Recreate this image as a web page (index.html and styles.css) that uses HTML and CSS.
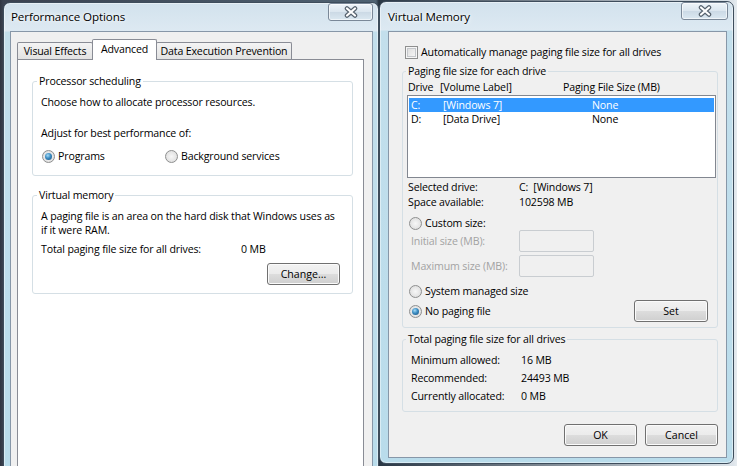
FILE: index.html
```html
<!DOCTYPE html>
<html lang="en">
<head>
<meta charset="utf-8">
<title>Performance Options</title>
<link rel="stylesheet" href="styles.css">
</head>
<body>
<main class="desktop">
  <section class="win win-perf">
    <header class="titlebar">
      <span class="title">Performance Options</span>
      <span class="close"><svg width="14" height="12" viewBox="0 0 14 12"><path d="M3 2.5 L11 9.5 M11 2.5 L3 9.5" stroke="#56626e" stroke-width="4.5" stroke-linecap="round"/><path d="M3 2.5 L11 9.5 M11 2.5 L3 9.5" stroke="#fff" stroke-width="2.2" stroke-linecap="round"/></svg></span>
    </header>
    <div class="client client-perf">
      <nav class="tabs">
        <span class="tab tab-ve">Visual Effects</span>
        <span class="tab tab-adv active">Advanced</span>
        <span class="tab tab-dep">Data Execution Prevention</span>
      </nav>
      <div class="panel">
        <fieldset class="group group-proc">
          <legend>Processor scheduling</legend>
          <p class="line choose">Choose how to allocate processor resources.</p>
          <p class="line adjust">Adjust for best performance of:</p>
          <div class="radio-row">
            <label class="opt opt-programs"><span class="radio checked"></span>Programs</label>
            <label class="opt"><span class="radio"></span>Background services</label>
          </div>
        </fieldset>
        <fieldset class="group group-vm">
          <legend>Virtual memory</legend>
          <p class="para">A paging file is an area on the hard disk that Windows uses as<br>if it were RAM.</p>
          <div class="total"><span class="total-label">Total paging file size for all drives:</span><span>0 MB</span></div>
          <div class="change-row"><button class="btn btn-change">Change...</button></div>
        </fieldset>
      </div>
    </div>
  </section>

  <section class="win win-vm">
    <header class="titlebar">
      <span class="title">Virtual Memory</span>
      <span class="close"><svg width="14" height="12" viewBox="0 0 14 12"><path d="M3 2.5 L11 9.5 M11 2.5 L3 9.5" stroke="#56626e" stroke-width="4.5" stroke-linecap="round"/><path d="M3 2.5 L11 9.5 M11 2.5 L3 9.5" stroke="#fff" stroke-width="2.2" stroke-linecap="round"/></svg></span>
    </header>
    <div class="client client-vm">
      <label class="check-row"><span class="checkbox"></span>Automatically manage paging file size for all drives</label>
      <fieldset class="group group-drives">
        <legend>Paging file size for each drive</legend>
        <div class="list-head"><span class="c-drive">Drive</span><span class="c-label">[Volume Label]</span><span>Paging File Size (MB)</span></div>
        <ul class="listbox">
          <li class="row selected"><span class="c1">C:</span><span class="c2">[Windows 7]</span><span>None</span></li>
          <li class="row"><span class="c1">D:</span><span class="c2">[Data Drive]</span><span>None</span></li>
        </ul>
        <dl class="info">
          <dt>Selected drive:</dt><dd>C:&nbsp; [Windows 7]</dd>
          <dt>Space available:</dt><dd>102598 MB</dd>
        </dl>
        <label class="opt-row custom"><span class="radio"></span>Custom size:</label>
        <div class="size-row"><span class="disabled">Initial size (MB):</span><span class="input"></span></div>
        <div class="size-row max"><span class="disabled">Maximum size (MB):</span><span class="input"></span></div>
        <label class="opt-row system"><span class="radio"></span>System managed size</label>
        <div class="nopage-row"><label class="opt-row"><span class="radio checked"></span>No paging file</label><button class="btn btn-set">Set</button></div>
      </fieldset>
      <fieldset class="group group-total">
        <legend>Total paging file size for all drives</legend>
        <dl class="totals">
          <dt>Minimum allowed:</dt><dd>16 MB</dd>
          <dt>Recommended:</dt><dd>24493 MB</dd>
          <dt>Currently allocated:</dt><dd>0 MB</dd>
        </dl>
      </fieldset>
      <div class="buttons"><button class="btn">OK</button><button class="btn">Cancel</button></div>
    </div>
  </section>
</main>
</body>
</html>
```

FILE: styles.css
```css
* { box-sizing: border-box; }
html, body { margin: 0; padding: 0; }
body {
  width: 737px; height: 466px; overflow: hidden;
  font-family: "Open Sans", "Noto Sans", sans-serif;
  font-size: 10.6px; letter-spacing: -0.15px; line-height: 15px; color: #000;
  background: linear-gradient(to right, #2f3541 0, #3a4250 3px, #4f6272 376px, #24303c 379px, #2a3846 380px, #dde4ea 733px, #e6ebef 737px);
}
.desktop { position: relative; width: 737px; height: 466px; }

.win {
  position: absolute;
  display: flex; flex-direction: column;
  border: 1px solid #3e4d5c;
  border-radius: 7px 7px 0 0;
  background: linear-gradient(to bottom, #d2e2ed 0, #dde9f2 28px, #c3dfec 29px, #b9dceb 100%);
  box-shadow: inset 0 0 0 1px rgba(255,255,255,.45);
}
.win-perf { left: 3px; top: 2px; width: 376px; height: 480px; }
.win-vm { left: 379px; top: 1px; width: 355px; height: 463px; border-radius: 7px; }

.titlebar { flex: none; display: flex; justify-content: space-between; align-items: flex-start; }
.win-perf .titlebar { height: 28px; padding: 0 5px 0 7px; }
.win-vm .titlebar { height: 29px; padding: 0 5px 0 8px; }
.title { margin-top: 6px; font-size: 11.6px; letter-spacing: -0.1px; line-height: 15px; text-shadow: 0 0 6px #fff, 0 0 3px #fff; }
.win-vm .title { margin-top: 7px; }

.close {
  display: flex; align-items: center; justify-content: center;
  height: 18px;
  border: 1px solid #7a8898; border-radius: 3px;
  background: linear-gradient(#eef4f9 0, #dbe6ef 50%, #cbd9e5 50%, #dbe8f1 100%);
  box-shadow: inset 0 0 0 1px rgba(255,255,255,.6);
}
.win-perf .close { width: 45px; }
.win-vm .close { width: 47px; }

.client { flex: 1; display: flex; flex-direction: column; border: 1px solid #8797a8; background: #f0f0f0; }
.client-perf { margin: 0 5px 0 6px; }
.client-vm { margin: 0 6px 5px 8px; }

/* tabs */
.tabs { display: flex; align-items: flex-end; height: 21px; margin: 7px 0 -1px 6px; position: relative; z-index: 1; }
.tab {
  height: 17px; margin-bottom: 1px;
  border: 1px solid #898c95; border-bottom: none; border-radius: 2px 2px 0 0;
  background: linear-gradient(#f4f4f4, #e2e2e2);
  text-align: center; line-height: 17px; white-space: nowrap;
}
.tab-ve { width: 76px; }
.tab-adv { width: 65px; margin-left: -1px; }
.tab-dep { width: 136px; margin-left: -1px; }
.tab.active { height: 21px; margin-bottom: 0; background: #fff; line-height: 18px; position: relative; z-index: 1; }

.panel { flex: 1; margin-left: 6px; width: 347px; background: #fff; border: 1px solid #898c95; padding: 14px 10px 0 14px; }

/* group boxes */
.group { margin: 0; padding: 0; border: 1px solid #d5dfe5; border-radius: 3px; min-width: 0; }
.group legend { padding: 0 2px; margin-left: 4px; line-height: 15px; }
.group-drives legend, .group-total legend { margin-left: 3px; }

.line { margin: 0; padding-left: 8px; }
.choose { margin-top: 6px; }
.adjust { margin-top: 16px; }
.radio-row { display: flex; margin-top: 8px; padding: 0 0 11px 9px; }
.opt { display: flex; align-items: center; gap: 3px; }
.opt-programs { width: 123px; }

.group-vm { margin-top: 12px; }
.para { margin: 6px 0 0; padding-left: 8px; line-height: 14px; white-space: nowrap; }
.total { display: flex; margin-top: 5px; padding-left: 8px; }
.total-label { width: 200px; }
.change-row { display: flex; justify-content: flex-end; margin-top: 6px; padding: 0 12px 8px 0; }

/* buttons */
.btn {
  font: inherit; color: #000; padding: 0; margin: 0;
  height: 22px; line-height: 20px; width: 73px;
  border: 1px solid #707070; border-radius: 3px;
  background: linear-gradient(#f2f2f2 0, #ebebeb 50%, #dddddd 50%, #cfcfcf 100%);
  box-shadow: inset 0 0 0 1px #fbfbfb;
}
.btn-set { width: 74px; }

/* radios & checkbox */
.radio {
  flex: none; position: relative;
  width: 13px; height: 13px; border-radius: 50%;
  border: 1px solid #8e8f8f;
  background: radial-gradient(circle at 50% 50%, #f7f7f7 0, #e3e3e3 65%, #d2d2d2 100%);
}
.radio.checked::after {
  content: ""; position: absolute; left: 2px; top: 2px;
  width: 7px; height: 7px; border-radius: 50%;
  background: radial-gradient(circle at 40% 35%, #a5dbf7 0, #3b8cc2 45%, #1b4d78 100%);
}
.checkbox {
  flex: none; width: 13px; height: 13px;
  border: 1px solid #8e8f8f;
  background: linear-gradient(135deg, #d9d9d9, #fafafa);
  box-shadow: inset 0 0 0 1px #f6f6f6, inset 0 0 0 2px #c4c7cb;
}

/* virtual memory window */
.check-row { display: flex; align-items: center; gap: 3px; height: 15px; margin: 13px 0 0 16px; }
.group-drives { margin: 4px 8px 0 13px; }
.list-head { display: flex; height: 15px; margin-top: 1px; padding-left: 5px; }
.c-drive { width: 32px; }
.c-label { width: 123px; }
.listbox { list-style: none; margin: 0 1px 0 4px; padding: 2px 0 0; height: 83px; border: 1px solid #828790; background: #fff; }
.row { display: flex; height: 14px; line-height: 14px; margin: 0 1px; padding-left: 2px; }
.row.selected { background: #3399ff; color: #fff; }
.row .c1 { width: 32px; }
.row .c2 { width: 149px; }

.info { display: grid; grid-template-columns: 111px auto; margin: 2px 0 0; padding-left: 5px; }
.info dt, .info dd, .totals dt, .totals dd { margin: 0; }
.opt-row { display: flex; align-items: center; gap: 3px; }
.custom { height: 14px; margin-top: 6px; padding-left: 6px; }
.size-row { display: flex; align-items: center; height: 22px; padding-left: 8px; }
.size-row.max { margin-top: 3px; }
.disabled { width: 108px; color: #a3a3a3; }
.input { width: 75px; height: 22px; border: 1px solid #c9cdd1; border-radius: 2px; background: #f0f0f0; }
.system { height: 15px; margin-top: 7px; margin-bottom: 1px; padding-left: 6px; }
.nopage-row { display: flex; justify-content: space-between; align-items: center; height: 22px; padding: 0 9px 0 6px; margin-bottom: 5px; }

.group-total { margin: 4px 8px 0 13px; }
.totals { display: grid; grid-template-columns: 110px auto; margin: 4px 0 0; padding: 0 0 6px 8px; line-height: 18px; }
.buttons { display: flex; justify-content: flex-end; gap: 8px; margin: 12px 8px 0 0; }
```
